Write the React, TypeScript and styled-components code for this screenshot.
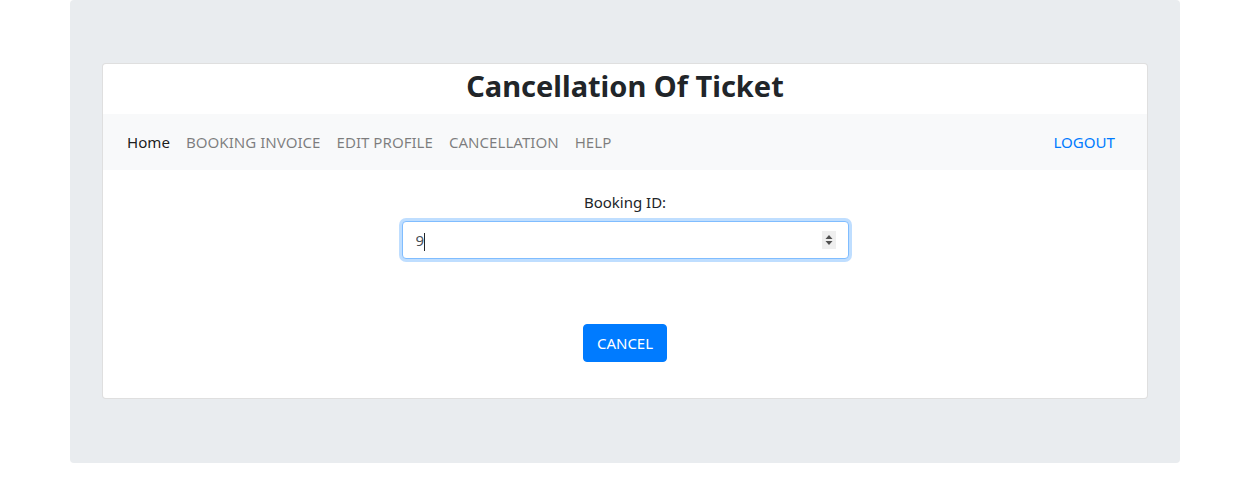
import React from "react";
import styled, { createGlobalStyle } from "styled-components";

const Global = createGlobalStyle`
  html, body { margin: 0; padding: 0; background: #fff; }
  body {
    font-family: "Segoe UI", "Noto Sans", "Open Sans", sans-serif;
    font-size: 15px;
    line-height: 1.6;
    color: #212529;
  }
  * { box-sizing: border-box; }
`;

const Jumbotron = styled.div`
  margin-left: 70px;
  width: 1110px;
  background: #e9ecef;
  border-radius: 4px;
  padding: 63px 32px 64px;
`;

const Card = styled.div`
  background: #fff;
  border: 1px solid rgba(0, 0, 0, 0.125);
  border-radius: 4px;
  display: flex;
  flex-direction: column;
`;

const Title = styled.h1`
  margin: 0;
  height: 50px;
  display: flex;
  align-items: center;
  justify-content: center;
  font-size: 29px;
  font-weight: 700;
  line-height: 1.2;
  padding-bottom: 6px;
`;

const Navbar = styled.nav`
  height: 56px;
  background: #f8f9fa;
  display: flex;
  align-items: center;
  padding: 0 16px;
  font-size: 15.1px;
`;

const NavList = styled.div`
  display: flex;
  align-items: center;
  flex: 1;
`;

const NavLink = styled.a<{ $active?: boolean }>`
  padding: 8px;
  color: ${(p) => (p.$active ? "rgba(0,0,0,0.9)" : "rgba(0,0,0,0.5)")};
  text-decoration: none;
  cursor: pointer;
`;

const LogoutLink = styled.a`
  padding: 8px;
  margin-right: 8px;
  color: #007bff;
  text-decoration: none;
  cursor: pointer;
`;

const FormArea = styled.form`
  display: flex;
  flex-direction: column;
  align-items: center;
  padding: 20px 0 36px;
`;

const Label = styled.label`
  display: block;
  margin-bottom: 7px;
  height: 24px;
`;

const InputWrap = styled.div`
  position: relative;
  width: 447px;
`;

const Input = styled.input`
  width: 100%;
  height: 38px;
  padding: 6px 13px;
  font: inherit;
  color: #495057;
  background: #fff;
  border: 1px solid #80bdff;
  border-radius: 4px;
  box-shadow: 0 0 0 3px rgba(0, 123, 255, 0.25);
  outline: none;
  caret-color: transparent;
`;

const Caret = styled.span`
  position: absolute;
  left: 22px;
  top: 12px;
  width: 1px;
  height: 18px;
  background: #212529;
  pointer-events: none;
`;

const Spinner = styled.span`
  position: absolute;
  right: 13px;
  top: 10px;
  width: 14px;
  height: 18px;
  background: #efefef;
  display: flex;
  align-items: center;
  justify-content: center;
`;

const Button = styled.button`
  margin-top: 65px;
  height: 38px;
  padding: 6px 13px;
  font: inherit;
  color: #fff;
  background: #007bff;
  border: 1px solid #007bff;
  border-radius: 4px;
  cursor: pointer;
`;

export default function App() {
  return (
    <>
      <Global />
      <Jumbotron>
        <Card>
          <Title>Cancellation Of Ticket</Title>
          <Navbar>
            <NavList>
              <NavLink $active>Home</NavLink>
              <NavLink>BOOKING INVOICE</NavLink>
              <NavLink>EDIT PROFILE</NavLink>
              <NavLink>CANCELLATION</NavLink>
              <NavLink>HELP</NavLink>
            </NavList>
            <LogoutLink>LOGOUT</LogoutLink>
          </Navbar>
          <FormArea onSubmit={(e) => e.preventDefault()}>
            <Label htmlFor="bid">Booking ID:</Label>
            <InputWrap>
              <Input id="bid" type="text" defaultValue="9" />
              <Caret />
              <Spinner>
                <svg width="8" height="12" viewBox="0 0 8 12">
                  <path d="M4 1 L7.5 5 L0.5 5 Z" fill="#505050" />
                  <path d="M4 11 L7.5 7 L0.5 7 Z" fill="#505050" />
                </svg>
              </Spinner>
            </InputWrap>
            <Button type="submit">CANCEL</Button>
          </FormArea>
        </Card>
      </Jumbotron>
    </>
  );
}
